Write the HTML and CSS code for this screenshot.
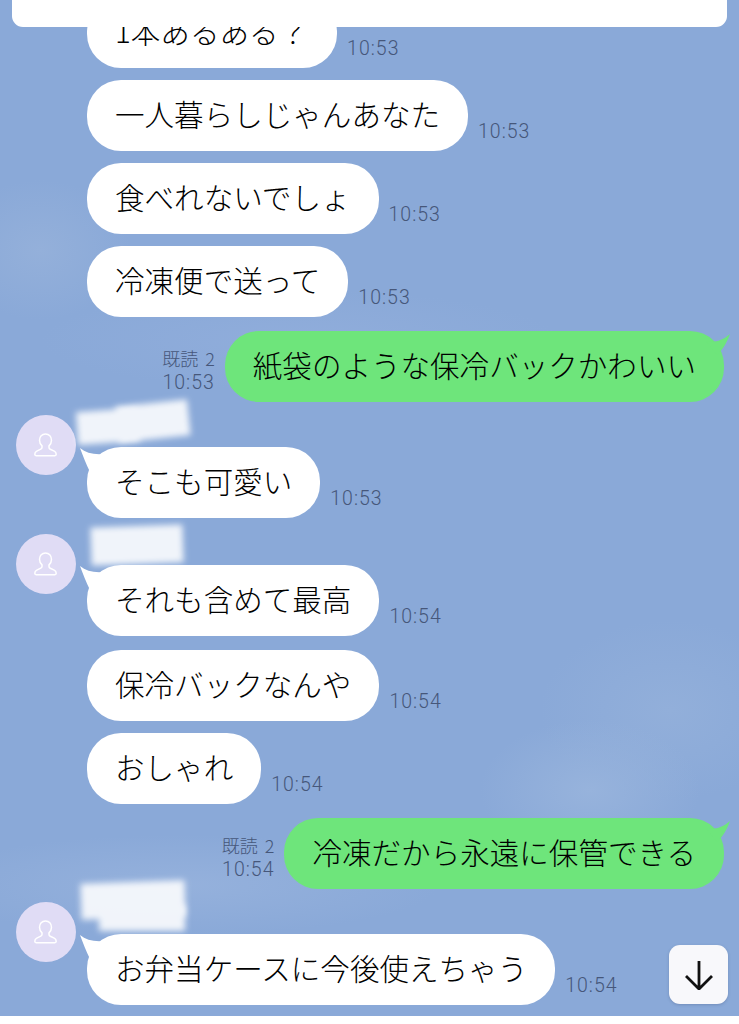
FILE: index.html
```html
<!DOCTYPE html>
<html lang="ja">
<head>
  <meta charset="UTF-8">
  <meta name="viewport" content="width=device-width, initial-scale=1.0">
  <title>トーク</title>
  <link rel="stylesheet" href="styles.css">
</head>
<body>
  <div class="chat">
    <div class="notice"></div>

    <div class="list">
      <div class="msg">
        <div class="bubble first">1本あるある？</div>
        <span class="time">10:53</span>
      </div>
      <div class="msg">
        <div class="bubble">一人暮らしじゃんあなた</div>
        <span class="time">10:53</span>
      </div>
      <div class="msg">
        <div class="bubble">食べれないでしょ</div>
        <span class="time">10:53</span>
      </div>
      <div class="msg">
        <div class="bubble">冷凍便で送って</div>
        <span class="time">10:53</span>
      </div>

      <div class="msg mine">
        <div class="meta"><span class="read">既読 2</span><span class="time">10:53</span></div>
        <div class="bubble green">
          紙袋のような保冷バックかわいい
          <svg class="tail-r" viewBox="0 0 24 24"><path d="M0 8C8 10 16 8 24 1C21 9 18 15 11 22Z"/></svg>
        </div>
      </div>

      <div class="group">
        <div class="avatar">
          <svg viewBox="0 0 24 24"><path d="M11.500 1c-3.600 0-6 2.800-6 6.300 0 2.400 1.100 4.300 2.500 5.600v1.600c0 .8-.4 1.300-1.200 1.700l-4 1.900C1.500 18.800.8 20 .8 21.300c0 .9.5 1.400 1.300 1.400h18.800c.8 0 1.300-.5 1.300-1.400 0-1.300-.7-2.500-2-3.200l-4-1.900c-.8-.4-1.200-.9-1.200-1.700v-1.600c1.400-1.300 2.500-3.200 2.500-5.600 0-3.500-2.400-6.300-6-6.300z"/></svg>
        </div>
        <div class="col">
          <div class="name"><i class="smear a1"></i><i class="smear a2"></i></div>
          <div class="msg plain">
            <div class="bubble">
              <svg class="tail-l" viewBox="0 0 24 24"><path d="M0 0C6 5 14 7 24 6L10 24C6 16 3 8 0 0Z"/></svg>
              そこも可愛い
            </div>
            <span class="time">10:53</span>
          </div>
        </div>
      </div>

      <div class="group">
        <div class="avatar second">
          <svg viewBox="0 0 24 24"><path d="M11.500 1c-3.600 0-6 2.800-6 6.300 0 2.400 1.100 4.300 2.500 5.600v1.600c0 .8-.4 1.300-1.200 1.700l-4 1.900C1.500 18.800.8 20 .8 21.300c0 .9.5 1.400 1.300 1.400h18.800c.8 0 1.300-.5 1.300-1.400 0-1.300-.7-2.500-2-3.200l-4-1.900c-.8-.4-1.200-.9-1.200-1.700v-1.600c1.400-1.300 2.500-3.200 2.500-5.600 0-3.500-2.400-6.300-6-6.300z"/></svg>
        </div>
        <div class="col">
          <div class="name tall"><i class="smear b1"></i></div>
          <div class="msg plain">
            <div class="bubble">
              <svg class="tail-l" viewBox="0 0 24 24"><path d="M0 0C6 5 14 7 24 6L10 24C6 16 3 8 0 0Z"/></svg>
              それも含めて最高
            </div>
            <span class="time">10:54</span>
          </div>
        </div>
      </div>

      <div class="msg after-group">
        <div class="bubble">保冷バックなんや</div>
        <span class="time">10:54</span>
      </div>
      <div class="msg">
        <div class="bubble">おしゃれ</div>
        <span class="time">10:54</span>
      </div>

      <div class="msg mine">
        <div class="meta"><span class="read">既読 2</span><span class="time">10:54</span></div>
        <div class="bubble green">
          冷凍だから永遠に保管できる
          <svg class="tail-r" viewBox="0 0 24 24"><path d="M0 8C8 10 16 8 24 1C21 9 18 15 11 22Z"/></svg>
        </div>
      </div>

      <div class="group">
        <div class="avatar">
          <svg viewBox="0 0 24 24"><path d="M11.500 1c-3.600 0-6 2.800-6 6.300 0 2.400 1.100 4.300 2.500 5.600v1.600c0 .8-.4 1.300-1.200 1.700l-4 1.900C1.500 18.800.8 20 .8 21.300c0 .9.5 1.400 1.300 1.400h18.800c.8 0 1.300-.5 1.300-1.400 0-1.300-.7-2.500-2-3.200l-4-1.900c-.8-.4-1.200-.9-1.200-1.700v-1.600c1.400-1.300 2.500-3.200 2.500-5.600 0-3.500-2.400-6.300-6-6.300z"/></svg>
        </div>
        <div class="col">
          <div class="name"><i class="smear c1"></i><i class="smear c2"></i></div>
          <div class="msg plain">
            <div class="bubble">
              <svg class="tail-l" viewBox="0 0 24 24"><path d="M0 0C6 5 14 7 24 6L10 24C6 16 3 8 0 0Z"/></svg>
              お弁当ケースに今後使えちゃう
            </div>
            <span class="time">10:54</span>
          </div>
        </div>
      </div>
    </div>

    <button class="scroll-btn" aria-label="下へ">
      <svg viewBox="0 0 30 30"><path d="M15 1V29M2 16L15 29L28 16"/></svg>
    </button>
  </div>
</body>
</html>
```

FILE: styles.css
```css
* {
  box-sizing: border-box;
}
body {
  margin: 0;
  background: #fff;
  font-family: "Noto Sans CJK JP", "Noto Sans", sans-serif;
  color: #000;
}
.chat {
  position: relative;
  height: 1016px;
  overflow: hidden;
  background:
    radial-gradient(ellipse 110px 70px at 590px 790px, #97b3dc 0%, rgba(151,179,220,0) 100%),
    radial-gradient(ellipse 130px 90px at 670px 710px, #92afda 0%, rgba(146,175,218,0) 100%),
    radial-gradient(ellipse 90px 70px at 40px 250px, #94b0da 0%, rgba(148,176,218,0) 100%),
    radial-gradient(ellipse 260px 50px at 180px 885px, #95b1dc 0%, rgba(149,177,220,0) 100%),
    radial-gradient(ellipse 260px 50px at 300px 340px, #90addb 0%, rgba(144,173,219,0) 100%),
    #8aa9d8;
}
.notice {
  position: absolute;
  top: 0;
  left: 12px;
  right: 12px;
  height: 27px;
  background: #fff;
  border-radius: 0 0 11px 11px;
  z-index: 2;
}
.list {
  display: flex;
  flex-direction: column;
  margin-top: -3px;
}

/* rows */
.msg {
  display: flex;
  align-items: flex-end;
  gap: 10px;
  margin: 0 0 12px 87px;
}
.msg.after-group {
  margin-top: 14px;
}
.msg.mine {
  justify-content: flex-end;
  margin: 2px 15px 0 0;
}
.msg.plain {
  margin: 0;
}
.bubble {
  position: relative;
  height: 71px;
  padding: 0 28px;
  border-radius: 34px;
  background: #fff;
  font-size: 29.550px;
  font-weight: 300;
  line-height: 67px;
  white-space: nowrap;
}
.bubble.first {
  padding-right: 29px;
}
.green {
  background: #6ee57b;
}
.time {
  display: block;
  margin-bottom: 8px;
  font-family: Roboto, "Liberation Sans", sans-serif;
  font-size: 19.500px;
  font-weight: 300;
  line-height: 22px;
  letter-spacing: 1px;
  color: #46577a;
}
.meta {
  display: flex;
  flex-direction: column;
  align-items: flex-end;
}
.read {
  margin-bottom: 2px;
  font-size: 18px;
  font-weight: 300;
  line-height: 24px;
  word-spacing: 3px;
  color: #46577a;
}
.meta .time {
  margin-bottom: 8px;
}

/* bubble tails */
.tail-l,
.tail-r {
  position: absolute;
  width: 24px;
  height: 24px;
}
.tail-l {
  left: -7px;
  top: 1px;
  fill: #fff;
}
.tail-r {
  right: -6px;
  top: 2px;
  fill: #6ee57b;
}

/* other people's messages */
.group {
  display: flex;
  gap: 11px;
  padding-left: 16px;
}
.avatar {
  flex: none;
  display: flex;
  align-items: center;
  justify-content: center;
  width: 60px;
  height: 60px;
  margin-top: 13px;
  border-radius: 50%;
  background: #e0dcf5;
}
.avatar.second {
  margin-top: 16px;
}
.avatar svg {
  width: 24px;
  height: 24px;
  fill: none;
  stroke: #fff;
  stroke-width: 1.500;
}
.name {
  position: relative;
  height: 45px;
  opacity: 0.88;
}
.name.tall {
  height: 47px;
}
.smear {
  position: absolute;
  background: #fff;
  filter: blur(3px);
}
.a1 { left: -10px; top: 8px; width: 62px; height: 33px; transform: rotate(-4deg); }
.a2 { left: 30px; top: 1px; width: 72px; height: 36px; transform: rotate(-6deg); }
.b1 { left: 4px; top: 8px; width: 92px; height: 38px; transform: rotate(-2deg); }
.c1 { left: -6px; top: -7px; width: 104px; height: 36px; transform: rotate(-2deg); }
.c2 { left: 12px; top: 16px; width: 86px; height: 26px; }

.scroll-btn {
  position: absolute;
  left: 669px;
  top: 945px;
  width: 59px;
  height: 59px;
  padding: 0;
  border: none;
  border-radius: 11px;
  background: #f8f8fb;
  box-shadow: 0 1px 3px rgba(60, 80, 120, 0.3);
  display: flex;
  align-items: center;
  justify-content: center;
}
.scroll-btn svg {
  width: 30px;
  height: 30px;
  fill: none;
  stroke: #111;
  stroke-width: 2.800;
}
```
